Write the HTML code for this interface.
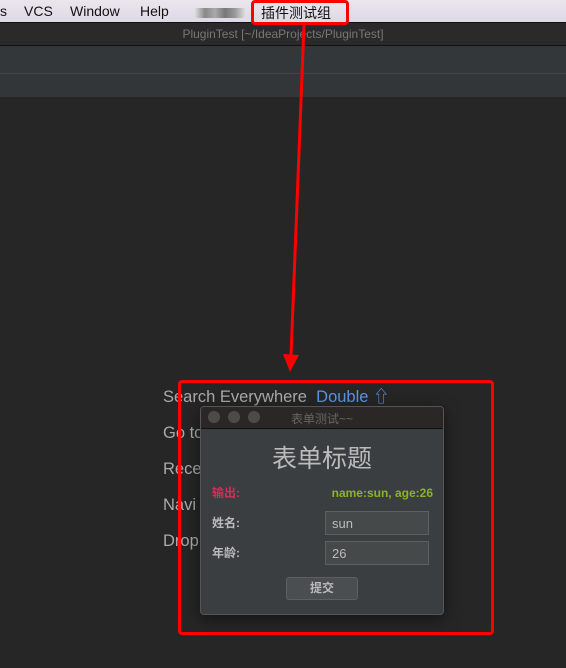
<!DOCTYPE html>
<html><head><meta charset="utf-8"><style>
body{margin:0;width:566px;height:668px;overflow:hidden;background:#262626;position:relative;font-family:"Liberation Sans","Noto Sans CJK SC",sans-serif}
.a{position:absolute}
.m{position:absolute;top:3px;font-size:14px;color:#111}
</style></head><body>
<div class="a" style="left:0;top:0;width:566px;height:22px;background:linear-gradient(#ebe6ec,#ddd9e6);"></div>
<div class="m" style="left:0">s</div>
<div class="m" style="left:24px">VCS</div>
<div class="m" style="left:70px">Window</div>
<div class="m" style="left:140px">Help</div>
<div class="a" style="left:195px;top:8px;width:50px;height:10px;background:linear-gradient(90deg,#ddd,#888 20%,#aaa 40%,#777 60%,#999 80%,#ddd)"></div>
<div class="m" style="left:261px">插件测试组</div>
<div class="a" style="left:0;top:22px;width:566px;height:23px;background:#2a2a2a;border-top:1px solid #111;box-sizing:border-box"></div>
<div class="a" style="left:0;top:27px;width:566px;text-align:center;font-size:12px;color:#777">PluginTest [~/IdeaProjects/PluginTest]</div>
<div class="a" style="left:0;top:45px;width:566px;height:28px;background:#34373a;border-top:1px solid #111;box-sizing:border-box"></div>
<div class="a" style="left:0;top:73px;width:566px;height:23px;background:#333638;border-top:1px solid #444"></div>
<div class="a" style="left:163px;top:379px;font-size:16.5px;color:#aaa;line-height:36px">Search Everywhere <span style="color:#5a95e6">&nbsp;Double ⇧</span><br>Go to<br>Rece<br>Navi<br>Drop</div>
<div class="a" style="left:200px;top:406px;width:244px;height:209px;background:#3b3e40;border:1px solid #555;border-radius:4px;box-sizing:border-box;overflow:hidden;box-shadow:0 4px 16px rgba(0,0,0,.5)">
 <div style="height:21px;background:#2a2726;border-bottom:1px solid #111;position:relative">
  <span class="a" style="left:7px;top:4px;width:12px;height:12px;border-radius:50%;background:#4d4b4a"></span>
  <span class="a" style="left:27px;top:4px;width:12px;height:12px;border-radius:50%;background:#4d4b4a"></span>
  <span class="a" style="left:47px;top:4px;width:12px;height:12px;border-radius:50%;background:#4d4b4a"></span>
  <div class="a" style="left:0;width:242px;top:3px;text-align:center;font-size:12px;color:#666">表单测试~~</div>
 </div>
 <div class="a" style="left:0;width:242px;top:32px;text-align:center;font-size:25px;color:#bbb">表单标题</div>
 <div class="a" style="left:11px;top:77px;font-size:12px;color:#d2305a;font-weight:bold">输出:</div>
 <div class="a" style="right:10px;top:79px;font-size:12px;color:#8ab22a;font-weight:bold">name:sun, age:26</div>
 <div class="a" style="left:11px;top:107px;font-size:12px;color:#bbb;font-weight:bold">姓名:</div>
 <div class="a" style="left:11px;top:137px;font-size:12px;color:#bbb;font-weight:bold">年龄:</div>
 <div class="a" style="left:124px;top:104px;width:104px;height:24px;border:1px solid #5e6060;background:#45494a;box-sizing:border-box;font-size:13px;color:#bbb;padding:4px 6px">sun</div>
 <div class="a" style="left:124px;top:134px;width:104px;height:24px;border:1px solid #5e6060;background:#45494a;box-sizing:border-box;font-size:13px;color:#bbb;padding:4px 6px">26</div>
 <div class="a" style="left:85px;top:170px;width:72px;height:23px;border:1px solid #5e6060;border-radius:3px;background:#4a4e50;box-sizing:border-box;font-size:12px;color:#bbb;text-align:center;line-height:21px;font-weight:bold">提交</div>
</div>
<div class="a" style="left:178px;top:380px;width:316px;height:255px;border:3px solid #f00;border-radius:4px;box-sizing:border-box"></div>
<div class="a" style="left:251px;top:0;width:98px;height:25px;border:3px solid #f00;border-radius:4px;box-sizing:border-box"></div>
<svg class="a" style="left:0;top:0" width="566" height="668"><line x1="304" y1="25" x2="291" y2="356" stroke="#f00" stroke-width="3"/><polygon points="283,354 299,355 290,372" fill="#f00"/></svg>
</body></html>
